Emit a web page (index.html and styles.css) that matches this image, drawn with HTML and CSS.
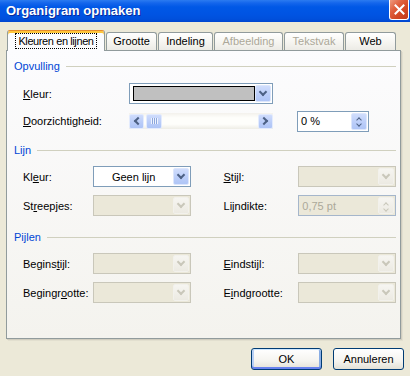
FILE: index.html
```html
<!DOCTYPE html>
<html lang="nl">
<head>
    <meta charset="UTF-8">
    <title>Organigram opmaken</title>
    <link rel="stylesheet" href="styles.css">
</head>
<body>

    <!-- Titelbalk -->
    <div class="titlebar">
        <span class="title">Organigram opmaken</span>
        <span class="close">
            <svg width="11" height="11" viewBox="0 0 11 11"><path d="M1.5 1.5 L9.5 9.5 M9.5 1.5 L1.5 9.5" stroke="#fff" stroke-width="2" stroke-linecap="square"/></svg>
        </span>
    </div>

    <div class="content">
        <!-- Tabbladen -->
        <div class="tabs">
            <div class="tab active tab-kleuren"><span class="focus">Kleuren en lijnen</span></div>
            <div class="tab tab-grootte">Grootte</div>
            <div class="tab tab-indeling">Indeling</div>
            <div class="tab tab-afbeelding disabled">Afbeelding</div>
            <div class="tab tab-tekstvak disabled">Tekstvak</div>
            <div class="tab tab-web">Web</div>
        </div>

        <div class="panel">
            <!-- Opvulling -->
            <div class="group-head"><span>Opvulling</span></div>
            <div class="row fill-row first">
                <span class="label wide"><u>K</u>leur:</span>
                <div class="combo color-combo">
                    <span class="swatch"></span>
                    <span class="drop"><i class="chev down"></i></span>
                </div>
            </div>
            <div class="row fill-row second">
                <span class="label wide"><u>D</u>oorzichtigheid:</span>
                <div class="scroll">
                    <span class="sb-btn"><i class="chev left"></i></span>
                    <span class="sb-thumb"><i class="grip"></i></span>
                    <span class="sb-track"></span>
                    <span class="sb-btn"><i class="chev right"></i></span>
                </div>
                <div class="spin">
                    <span class="spin-val">0 %</span>
                    <span class="spin-btn"><i class="chev up small"></i><i class="chev down small"></i></span>
                </div>
            </div>

            <!-- Lijn -->
            <div class="group-head lijn"><span>Lijn</span></div>
            <div class="row grid-row first">
                <span class="label col1">Kl<u>e</u>ur:</span>
                <div class="combo text-combo">
                    <span class="combo-text">Geen lijn</span>
                    <span class="drop"><i class="chev down"></i></span>
                </div>
                <span class="label col3"><u>S</u>tijl:</span>
                <div class="combo disabled"><span class="drop"><i class="chev down"></i></span></div>
            </div>
            <div class="row grid-row second">
                <span class="label col1">St<u>r</u>eepjes:</span>
                <div class="combo disabled"><span class="drop"><i class="chev down"></i></span></div>
                <span class="label col3">Li<u>j</u>ndikte:</span>
                <div class="spin disabled">
                    <span class="spin-val">0,75 pt</span>
                    <span class="spin-btn"><i class="chev up small"></i><i class="chev down small"></i></span>
                </div>
            </div>

            <!-- Pijlen -->
            <div class="group-head pijlen"><span>Pijlen</span></div>
            <div class="row grid-row first">
                <span class="label col1">Begins<u>t</u>ijl:</span>
                <div class="combo disabled"><span class="drop"><i class="chev down"></i></span></div>
                <span class="label col3"><u>E</u>indstijl:</span>
                <div class="combo disabled"><span class="drop"><i class="chev down"></i></span></div>
            </div>
            <div class="row grid-row second">
                <span class="label col1">Begingr<u>o</u>otte:</span>
                <div class="combo disabled"><span class="drop"><i class="chev down"></i></span></div>
                <span class="label col3">E<u>i</u>ndgrootte:</span>
                <div class="combo disabled"><span class="drop"><i class="chev down"></i></span></div>
            </div>
        </div>

        <!-- Knoppen -->
        <div class="buttons">
            <div class="btn default">OK</div>
            <div class="btn">Annuleren</div>
        </div>
    </div>

</body>
</html>
```

FILE: styles.css
```css
body {
    margin: 0;
    width: 410px;
    height: 376px;
    overflow: hidden;
    background: #ECE9D8;
    font-family: "Liberation Sans", Arial, sans-serif;
    font-size: 11px;
    color: #000;
}

u {
    text-decoration: underline;
    text-underline-offset: 1px;
}

/* Titelbalk */
.titlebar {
    height: 22px;
    display: flex;
    justify-content: space-between;
    align-items: flex-start;
    background: linear-gradient(#2B7BF0 0, #1466EC 3px, #0058E6 7px, #0054E3 14px, #0050DC 19px, #0045CF 22px);
}

.title {
    color: #fff;
    font-weight: bold;
    font-size: 13px;
    line-height: 15px;
    padding: 3px 0 0 6px;
    text-shadow: 1px 1px 0 #0A2A9C;
}

.close {
    box-sizing: border-box;
    width: 20px;
    height: 20px;
    margin-right: 1px;
    border: 1px solid #fff;
    border-top: none;
    border-radius: 0 0 3px 3px;
    background: linear-gradient(135deg, #EE9A7E 0, #E0603E 35%, #D24824 65%, #C13A1C 100%);
    display: flex;
    align-items: center;
    justify-content: center;
}

.content {
    padding: 8px 6px 0 6px;
}

/* Tabbladen */
.tabs {
    display: flex;
    align-items: flex-end;
    gap: 1px;
    height: 20px;
    padding-left: 1px;
    position: relative;
    z-index: 1;
}

.tab {
    box-sizing: border-box;
    height: 18px;
    border: 1px solid #919B9C;
    border-bottom: none;
    border-radius: 3px 3px 0 0;
    background: linear-gradient(#FFFFFF, #F7F6F2 50%, #ECEBE5);
    text-align: center;
    line-height: 17px;
    white-space: nowrap;
}

.tab.disabled {
    color: #ACA899;
}

.tab.active {
    height: 21px;
    margin-bottom: -1px;
    background: #FCFCFE;
    border-top: 1px solid #E68B2C;
    box-shadow: inset 0 2px 0 #FFC73C;
    padding-top: 2px;
    line-height: 14px;
}

.tab-kleuren { width: 98px; }
.tab-grootte { width: 51px; }
.tab-indeling { width: 55px; }
.tab-afbeelding { width: 69px; }
.tab-tekstvak { width: 60px; }
.tab-web { width: 51px; }

.focus {
    display: inline-block;
    border: 1px dotted #000;
    padding: 0 2px;
    line-height: 14px;
    letter-spacing: -0.4px;
}

/* Paneel */
.panel {
    box-sizing: border-box;
    width: 395px;
    height: 289px;
    border: 1px solid #919B9C;
    background: linear-gradient(#FCFCFE, #F4F3EE);
    box-shadow: 1px 1px 0 #D0CDBF, 2px 2px 0 #E2DFCF;
    padding: 8px 4px 0 7px;
}

.group-head {
    display: flex;
    align-items: center;
    gap: 6px;
    height: 14px;
    line-height: 14px;
    color: #0046D5;
}

    .group-head::after {
        content: "";
        flex: 1;
        border-top: 1px solid #D0D0BF;
    }

    .group-head.lijn {
        margin-top: 12px;
    }

    .group-head.pijlen {
        margin-top: 14px;
    }

.row {
    display: flex;
    align-items: center;
    padding-left: 9px;
    height: 21px;
}

    .row.first {
        margin-top: 9px;
    }

    .row.second {
        margin-top: 8px;
    }

    .fill-row.first {
        margin-top: 10px;
    }

    .fill-row.second {
        margin-top: 7px;
        height: 20px;
    }

.label.wide { width: 106px; }
.label.col1 { width: 70px; }
.label.col3 { width: 75px; margin-left: 33px; }

/* Keuzelijsten */
.combo {
    box-sizing: border-box;
    width: 98px;
    height: 21px;
    border: 1px solid #7F9DB9;
    background: #fff;
    display: flex;
    align-items: center;
    justify-content: flex-end;
    padding: 1px;
}

    .combo.color-combo {
        width: 144px;
        justify-content: space-between;
    }

    .combo.disabled {
        border-color: #C9C7BA;
        background: #EBE8D9;
    }

.swatch {
    box-sizing: border-box;
    width: 123px;
    height: 15px;
    margin-left: 2px;
    border: 1px solid #000;
    background: #C0C0C0;
}

.combo-text {
    flex: 1;
    text-align: center;
}

.drop {
    box-sizing: border-box;
    width: 16px;
    height: 100%;
    border: 1px solid #DCE6FC;
    border-radius: 2px;
    background: linear-gradient(#D0DDFC, #BACDF9 60%, #AFC5F6);
    display: flex;
    align-items: center;
    justify-content: center;
}

.disabled .drop {
    border-color: #F2F1EC;
    background: linear-gradient(#F6F5F1, #ECEAE2);
}

.chev {
    display: block;
    width: 4px;
    height: 4px;
    border: solid #4D6185;
    border-width: 0 2px 2px 0;
}

    .chev.down { transform: rotate(45deg); margin-top: -3px; }
    .chev.up { transform: rotate(-135deg); margin-top: 2px; }
    .chev.left { transform: rotate(135deg); margin-left: 3px; }
    .chev.right { transform: rotate(-45deg); margin-left: -3px; }

    .chev.small {
        width: 3px;
        height: 3px;
        border-width: 0 1.5px 1.5px 0;
    }

.disabled .chev {
    border-color: #C9C7BA;
}

/* Schuifbalk */
.scroll {
    display: flex;
    align-items: center;
    width: 144px;
    height: 16px;
    background: linear-gradient(#F3F1EC, #FEFEFB 30%, #FEFEFB 70%, #EEEDE5);
}

.sb-btn, .sb-thumb {
    box-sizing: border-box;
    width: 15px;
    height: 15px;
    border: 1px solid #E3EBFD;
    border-radius: 2px;
    background: linear-gradient(#CFDCFC, #B9CCF8 60%, #AEC4F6);
    display: flex;
    align-items: center;
    justify-content: center;
}

.sb-thumb {
    margin-left: 2px;
    width: 16px;
}

.grip {
    width: 7px;
    height: 6px;
    background: repeating-linear-gradient(90deg, #EEF3FE 0 1px, #8CA6DC 1px 2px);
}

.sb-track {
    flex: 1;
}

/* Draaivak */
.spin {
    box-sizing: border-box;
    width: 72px;
    height: 21px;
    margin-left: 24px;
    border: 1px solid #7F9DB9;
    background: #fff;
    display: flex;
    justify-content: space-between;
    align-items: center;
    padding: 1px;
}

.grid-row .spin {
    width: 98px;
    margin-left: 0;
}

.spin.disabled {
    border-color: #A5B6CB;
    background: #EBE8D9;
    color: #ACA899;
}

.spin-val {
    padding-left: 2px;
}

.spin-btn {
    box-sizing: border-box;
    width: 16px;
    height: 100%;
    border: 1px solid #DCE6FC;
    border-radius: 2px;
    background: linear-gradient(#D0DDFC, #BACDF9 60%, #AFC5F6);
    display: flex;
    flex-direction: column;
    align-items: center;
    justify-content: center;
    gap: 3px;
}

.spin.disabled .spin-btn {
    border-color: #F2F1EC;
    background: linear-gradient(#F6F5F1, #ECEAE2);
}

/* Knoppen */
.buttons {
    display: flex;
    justify-content: flex-end;
    gap: 11px;
    margin-top: 9px;
}

.btn {
    box-sizing: border-box;
    width: 71px;
    height: 22px;
    border: 1px solid #003C74;
    border-radius: 3px;
    background: linear-gradient(#FFFFFF, #F5F4EF 60%, #E3E1D6);
    display: flex;
    align-items: center;
    justify-content: center;
}

    .btn.default {
        box-shadow: inset 0 1px 0 #CEE7FF, inset 0 -2px 0 #6982EE, inset 2px 0 0 #B8D0F5, inset -2px 0 0 #89ADE4;
    }
```
